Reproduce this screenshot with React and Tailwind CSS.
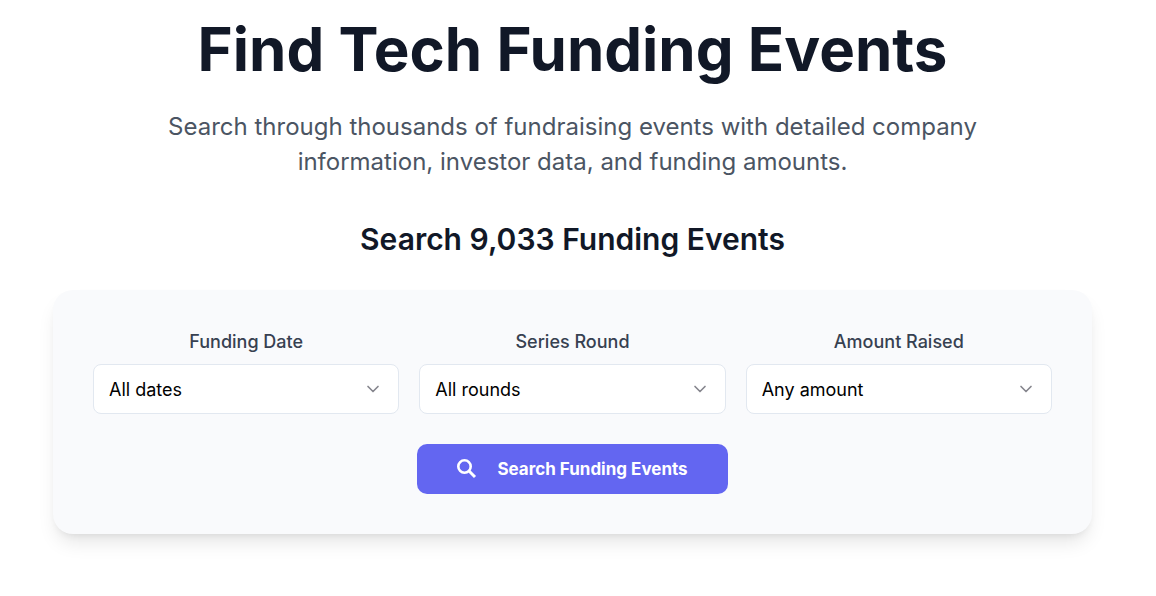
import { useState } from "react"
import { ChevronDown } from "lucide-react"

const filters = [
  { id: "date", label: "Funding Date", options: ["All dates", "Last 7 days", "Last 30 days", "Last 12 months"] },
  { id: "round", label: "Series Round", options: ["All rounds", "Seed", "Series A", "Series B", "Series C"] },
  { id: "amount", label: "Amount Raised", options: ["Any amount", "$1M+", "$10M+", "$50M+", "$100M+"] },
]

function SearchIcon() {
  return (
    <svg width="20" height="20" viewBox="0 0 20 20" fill="none" stroke="currentColor" strokeWidth="2.6" aria-hidden="true">
      <circle cx="7.5" cy="7.5" r="6.2" />
      <path d="M11.8 11.8L18 18" strokeWidth="3" />
    </svg>
  )
}

function FilterSelect({ id, label, options, value, onChange }) {
  return (
    <div>
      <label htmlFor={id} className="block text-center text-lg font-medium text-[#374151] mb-2">
        {label}
      </label>
      <div className="relative">
        <select
          id={id}
          value={value}
          onChange={(e) => onChange(id, e.target.value)}
          className="w-full h-[50px] appearance-none rounded-lg border border-[#e2e8f0] bg-white pl-[15px] pr-10 pt-[2px] text-lg text-black focus:outline-none focus:ring-2 focus:ring-indigo-500"
        >
          {options.map((option) => (
            <option key={option}>{option}</option>
          ))}
        </select>
        <ChevronDown
          size={20}
          strokeWidth={2}
          className="pointer-events-none absolute right-4 inset-y-0 my-auto text-[#85858d]"
        />
      </div>
    </div>
  )
}

export default function App() {
  const [values, setValues] = useState({ date: "All dates", round: "All rounds", amount: "Any amount" })

  const handleChange = (id, value) => {
    setValues({ ...values, [id]: value })
  }

  return (
    <div className="min-h-screen bg-white font-['Inter',sans-serif]">
      <main className="pl-[53px] pr-16 pt-[19px] pb-15 text-center">
        <h1 className="text-6xl font-bold text-[#111827]">Find Tech Funding Events</h1>
        <p className="mx-auto mt-[30px] max-w-[840px] text-2xl leading-[35px] text-[#4b5563]">
          Search through thousands of fundraising events with detailed company information, investor data, and funding
          amounts.
        </p>
        <h2 className="mt-10 text-3xl leading-10 font-semibold text-[#111827]">Search 9,033 Funding Events</h2>

        {/* Search form */}
        <form
          onSubmit={(e) => e.preventDefault()}
          className="mt-[31px] rounded-[20px] bg-[#f9fafc] px-10 pt-[38px] pb-10 shadow-[0_12px_19px_-4px_rgba(0,0,0,0.1),0_5px_8px_-5px_rgba(0,0,0,0.1)]"
        >
          <div className="grid grid-cols-3 gap-5">
            {filters.map((filter) => (
              <FilterSelect key={filter.id} {...filter} value={values[filter.id]} onChange={handleChange} />
            ))}
          </div>
          <button
            type="submit"
            className="mx-auto mt-[30px] flex h-[50px] items-center gap-5 rounded-[10px] bg-[#6366f1] px-10 text-[17px] font-bold text-white hover:bg-indigo-600"
          >
            <SearchIcon />
            <span className="pt-0.5">Search Funding Events</span>
          </button>
        </form>
      </main>
    </div>
  )
}
